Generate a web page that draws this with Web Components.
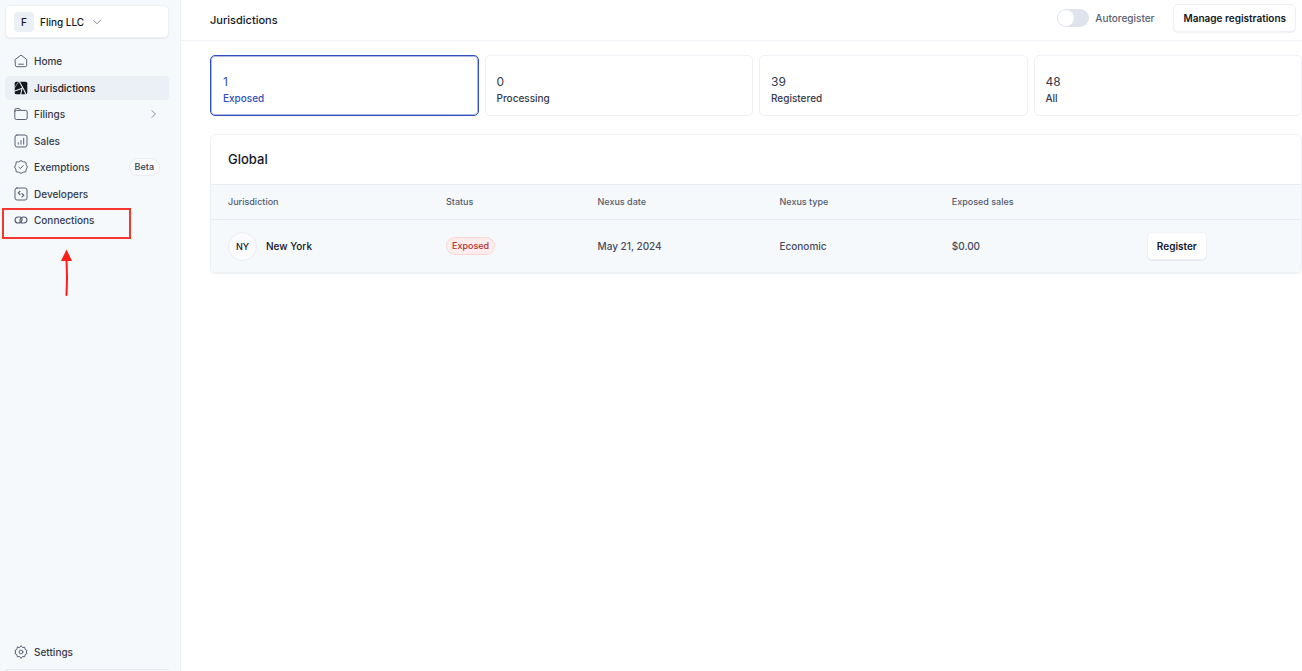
<!DOCTYPE html>
<html lang="en">
<head>
<meta charset="utf-8">
<title>Jurisdictions</title>
<style>
  body {
    margin: 0;
    font-family: Inter, "Liberation Sans", sans-serif;
    font-size: 10px;
    font-weight: 500;
    line-height: 16px;
    color: #353a4a;
    background: #fff;
    --line: #edf0f5;
    --tint: #f6f9fc;
    --ink: #14171f;
    --muted: #545b6d;
    --blue: #2f4fc0;
    --mark: #f5372f;
  }
</style>
</head>
<body>
<tax-app></tax-app>

<script>
const ICONS = {
  home: `<path d="M1.3 5.400 7 1.100l5.700 4.300v5.800a1.500 1.500 0 0 1-1.500 1.500H2.800a1.500 1.500 0 0 1-1.500-1.500z"/><path d="M4.600 10.200h4.800"/>`,
  map: `<rect x=".7" y=".7" width="12.600" height="12.600" rx="1.600" fill="currentColor" stroke="none"/><path d="M5 0l5 9 2.200 5M8.300 7.300 0 10.300M7.800 8.500 6.600 14" stroke="#ebeff6" stroke-width="1.100"/><path d="M5.200 0 0 7.500" stroke="#ebeff6" stroke-width=".6"/>`,
  folder: `<path d="M.8 4.900V3a1.500 1.500 0 0 1 1.500-1.500h2.500c.6 0 1 .3 1.300.8l.6 1.100h5A1.500 1.500 0 0 1 13.200 4.900v6.100a1.500 1.500 0 0 1-1.500 1.500H2.300A1.500 1.500 0 0 1 .8 11z"/><path d="M.8 4.900a1.500 1.500 0 0 1 1.500-1.500h4"/>`,
  chart: `<rect x="1" y="1" width="12" height="12" rx="2"/><path d="M4.300 8.800v1.400M7 6.600v3.600M9.700 4.200v6"/>`,
  badge: `<path d="M4.700 1.800 7 .6l2.300 1.200 2.500.4.400 2.500L13.400 7l-1.200 2.300-.4 2.500-2.500.4L7 13.400l-2.300-1.200-2.500-.4-.4-2.500L.6 7l1.200-2.300.4-2.500z"/><path d="m4.900 7.200 1.500 1.400L9.200 5.600"/>`,
  code: `<rect x="1" y="1" width="12" height="12" rx="2"/><path d="M6 4.300 4.200 5.900 6 7.500M8 6.700l1.800 1.600L8 9.900" stroke-width="1.200"/>`,
  link: `<g stroke-width="1.200"><path d="M4.200 10A3 3 0 0 1 3.900 4h1.700c2 0 2.900 1.600 2.300 3.200C7.300 9 6 10 4.400 10"/><path d="M9.800 4a3 3 0 0 1 .3 6H8.400c-2 0-2.900-1.600-2.300-3.200C6.700 5 8 4 9.600 4" stroke-dasharray="12.500 1.600 9"/></g>`,
  gear: `<path d="M5.600 2.500 7 .6l1.400 1.900 2.300-.3.500 2.300 1.900 1-.9 1.500.9 1.500-1.900 1-.5 2.300-2.300-.3L7 13.400l-1.400-1.900-2.300.3-.5-2.300-1.900-1L1.800 7 .9 5.500l1.900-1 .5-2.300z"/><circle cx="7" cy="7" r="1.900"/>`,
  down: `<path d="m3.600 5.400 3.400 3.400 3.400-3.400"/>`,
  right: `<path d="m6 3.600 3.400 3.400L6 10.400"/>`
};

class UiIcon extends HTMLElement {
  constructor() {
    super();
    this.attachShadow({ mode: "open" });
  }

  connectedCallback() {
    this.shadowRoot.innerHTML = `
      <style>
        :host { display: block; flex: none; width: 14px; height: 14px; }
        svg { display: block; }
      </style>
      <svg width="14" height="14" viewBox="0 0 14 14" fill="none" stroke="currentColor" stroke-linecap="round" stroke-linejoin="round" aria-hidden="true">
        ${ICONS[this.getAttribute("name")]}
      </svg>`;
  }
}

class UiButton extends HTMLElement {
  constructor() {
    super();
    this.attachShadow({ mode: "open" });
    this.shadowRoot.innerHTML = `
      <style>
        :host { display: inline-block; }
        button {
          display: block;
          box-sizing: border-box;
          height: 28px;
          padding: 0 9px;
          border: 1px solid var(--line);
          border-radius: 5px;
          background: #fff;
          color: var(--ink);
          font: 600 10px/16px Inter, "Liberation Sans", sans-serif;
          box-shadow: 0 1px 1px #1c2a4412;
          white-space: nowrap;
          cursor: pointer;
        }
      </style>
      <button type="button"><slot></slot></button>`;
  }
}

class UiSwitch extends HTMLElement {
  constructor() {
    super();
    this.attachShadow({ mode: "open" });
    this.shadowRoot.innerHTML = `
      <style>
        :host { display: block; color: #596074; }
        label { display: flex; align-items: center; gap: 6px; cursor: pointer; }
        input {
          appearance: none;
          box-sizing: border-box;
          width: 32px;
          height: 18px;
          margin: 0;
          padding: 1px;
          border-radius: 9px;
          background: #dfe4ec;
          cursor: pointer;
        }
        input::before {
          content: "";
          display: block;
          width: 16px;
          height: 16px;
          border-radius: 50%;
          background: #fff;
        }
        input:checked { background: var(--blue); }
        input:checked::before { margin-left: auto; }
      </style>
      <label><input type="checkbox" role="switch"><slot></slot></label>`;
  }
}

class NavItem extends HTMLElement {
  constructor() {
    super();
    this.attachShadow({ mode: "open" });
  }

  connectedCallback() {
    this.shadowRoot.innerHTML = `
      <style>
        :host { display: block; position: relative; }
        a {
          display: flex;
          align-items: center;
          gap: 6px;
          height: 24px;
          padding: 0 9px;
          border-radius: 4px;
          color: inherit;
          text-decoration: none;
        }
        ui-icon { color: #596074; }
        .end { margin-left: auto; display: flex; }
        :host([active]) a { background: #ebeff6; color: var(--ink); }
        :host([active]) ui-icon { color: var(--ink); }
      </style>
      <a href="#"><ui-icon name="${this.getAttribute("icon")}"></ui-icon><slot></slot><span class="end"><slot name="end"></slot></span></a>
      <slot name="over"></slot>`;
  }
}

// red frame and arrow drawn over a nav item
class CalloutMark extends HTMLElement {
  constructor() {
    super();
    this.attachShadow({ mode: "open" });
    this.shadowRoot.innerHTML = `
      <style>
        :host { position: absolute; top: 0; left: -3px; pointer-events: none; }
        svg { display: block; }
      </style>
      <svg width="130" height="90" viewBox="0 0 130 90" fill="none" stroke="var(--mark)" stroke-width="2" aria-hidden="true">
        <rect x="1" y="1" width="127" height="29"/>
        <path d="M64.500 52q1 18 0 35" stroke="#fb1f18" stroke-linecap="round"/>
        <path d="m64.500 41.500 5.500 11.500h-11z" fill="#fb1f18" stroke="none"/>
      </svg>`;
  }
}

class SideBar extends HTMLElement {
  constructor() {
    super();
    this.attachShadow({ mode: "open" });
    this.shadowRoot.innerHTML = `
      <style>
        :host {
          box-sizing: border-box;
          display: flex;
          flex-direction: column;
          padding: 5px 11px 0 5px;
          border-right: 1px solid var(--line);
          background: var(--tint);
        }
        .org {
          display: flex;
          align-items: center;
          gap: 6px;
          box-sizing: border-box;
          height: 33px;
          padding: 0 8px;
          border: 1px solid var(--line);
          border-radius: 5px;
          background: #fff;
          box-shadow: 0 1px 1px #1c2a4412;
          color: var(--ink);
          font: 500 10px/16px Inter, "Liberation Sans", sans-serif;
          cursor: pointer;
        }
        .initial {
          width: 20px;
          line-height: 20px;
          border-radius: 4px;
          background: #ebeff6;
          text-align: center;
        }
        ui-icon { color: #858c9c; }
        nav {
          display: flex;
          flex-direction: column;
          justify-content: space-between;
          height: 183px;
          margin-top: 11px;
        }
        .beta {
          padding: 0 5px;
          border: 1px solid #e8ecf2;
          border-radius: 9px;
          background: #f9fbfd;
          font-size: 9px;
        }
        .foot { margin-top: auto; }
        .next { height: 1px; margin-top: 5px; border-top: 1px solid #e6eaf0; border-radius: 4px 4px 0 0; }
      </style>
      <button class="org" type="button"><span class="initial">F</span><span>Fling LLC</span><ui-icon name="down"></ui-icon></button>
      <nav>
        <nav-item icon="home">Home</nav-item>
        <nav-item icon="map" active>Jurisdictions</nav-item>
        <nav-item icon="folder">Filings<ui-icon slot="end" name="right"></ui-icon></nav-item>
        <nav-item icon="chart">Sales</nav-item>
        <nav-item icon="badge">Exemptions<span slot="end" class="beta">Beta</span></nav-item>
        <nav-item icon="code">Developers</nav-item>
        <nav-item icon="link">Connections<callout-mark slot="over"></callout-mark></nav-item>
      </nav>
      <nav-item class="foot" icon="gear">Settings</nav-item>
      <div class="next"></div>`;
  }
}

class StatTab extends HTMLElement {
  constructor() {
    super();
    this.attachShadow({ mode: "open" });
  }

  connectedCallback() {
    this.shadowRoot.innerHTML = `
      <style>
        :host { display: block; }
        button {
          display: block;
          box-sizing: border-box;
          width: 100%;
          height: 61px;
          padding: 8px 11px 0;
          border: 1px solid var(--line);
          border-radius: 5px;
          background: #fff;
          color: inherit;
          font: 500 10px/16px Inter, "Liberation Sans", sans-serif;
          text-align: left;
          cursor: pointer;
        }
        span { display: block; }
        .count { font-size: 12px; font-weight: 400; }
        :host([active]) button {
          padding-left: 12px;
          border-color: var(--blue);
          box-shadow: inset 0 0 0 1px #2f4fc066;
          color: var(--blue);
        }
      </style>
      <button type="button"><span class="count">${this.getAttribute("count")}</span><span><slot></slot></span></button>`;
  }
}

class JurisdictionTable extends HTMLElement {
  constructor() {
    super();
    this.attachShadow({ mode: "open" });
    this.rows = [
      { code: "NY", name: "New York", status: "Exposed", date: "May 21, 2024", type: "Economic", sales: "$0.00" }
    ];
  }

  connectedCallback() {
    this.shadowRoot.innerHTML = `
      <style>
        :host {
          display: block;
          border: 1px solid var(--line);
          border-radius: 5px;
          box-shadow: 0 1px 1px #1c2a4412;
          overflow: hidden;
        }
        h2 { margin: 0; padding: 0 17px; font-size: 13px; font-weight: 500; line-height: 49px; color: var(--ink); }
        table { width: 100%; table-layout: fixed; border-collapse: collapse; background: var(--tint); }
        th, td { padding: 0 0 0 17px; border-top: 1px solid #e8edf3; text-align: left; }
        th { height: 34px; font-size: 9px; font-weight: 500; color: var(--muted); }
        td { height: 52px; color: #454b5c; }
        .name { display: flex; align-items: center; gap: 9px; color: var(--ink); }
        .code {
          width: 27px;
          line-height: 27px;
          border: 1px solid #e8ecf2;
          border-radius: 50%;
          background: #fcfcfe;
          font-size: 9px;
          text-align: center;
        }
        .status {
          display: inline-block;
          padding: 0 5px;
          border: 1px solid #fbd5d3;
          border-radius: 9px;
          background: #fdedec;
          color: #b3302f;
          font-size: 9px;
        }
      </style>
      <h2>Global</h2>
      <table>
        <colgroup>
          <col style="width: 20%"><col style="width: 13.9%"><col style="width: 16.7%"><col style="width: 15.8%"><col style="width: 17.9%"><col>
        </colgroup>
        <thead>
          <tr><th>Jurisdiction</th><th>Status</th><th>Nexus date</th><th>Nexus type</th><th>Exposed sales</th><th></th></tr>
        </thead>
        <tbody>${this.rows.map((row) => this.renderRow(row)).join("")}</tbody>
      </table>`;
  }

  renderRow(row) {
    return `
      <tr>
        <td><div class="name"><span class="code">${row.code}</span>${row.name}</div></td>
        <td><span class="status">${row.status}</span></td>
        <td>${row.date}</td>
        <td>${row.type}</td>
        <td>${row.sales}</td>
        <td><ui-button>Register</ui-button></td>
      </tr>`;
  }
}

class TaxApp extends HTMLElement {
  constructor() {
    super();
    this.attachShadow({ mode: "open" });
    this.shadowRoot.innerHTML = `
      <style>
        :host { display: grid; grid-template-columns: 181px 1fr; min-height: 100vh; }
        header {
          display: flex;
          align-items: center;
          box-sizing: border-box;
          height: 41px;
          padding: 0 6px 4px 29px;
          border-bottom: 1px solid var(--line);
        }
        h1 { margin: 0 auto 0 0; padding-top: 4px; font-size: 11px; font-weight: 500; color: var(--ink); }
        ui-button { margin-left: 19px; }
        .content { display: grid; gap: 18px; padding: 14px 0 0 29px; }
        .stats { display: grid; grid-template-columns: repeat(4, 1fr); gap: 6px; }
      </style>
      <side-bar></side-bar>
      <main>
        <header>
          <h1>Jurisdictions</h1>
          <ui-switch>Autoregister</ui-switch>
          <ui-button>Manage registrations</ui-button>
        </header>
        <div class="content">
          <div class="stats">
            <stat-tab count="1" active>Exposed</stat-tab>
            <stat-tab count="0">Processing</stat-tab>
            <stat-tab count="39">Registered</stat-tab>
            <stat-tab count="48">All</stat-tab>
          </div>
          <jurisdiction-table></jurisdiction-table>
        </div>
      </main>`;
  }
}

customElements.define("ui-icon", UiIcon);
customElements.define("ui-button", UiButton);
customElements.define("ui-switch", UiSwitch);
customElements.define("nav-item", NavItem);
customElements.define("callout-mark", CalloutMark);
customElements.define("side-bar", SideBar);
customElements.define("stat-tab", StatTab);
customElements.define("jurisdiction-table", JurisdictionTable);
customElements.define("tax-app", TaxApp);
</script>
</body>
</html>
